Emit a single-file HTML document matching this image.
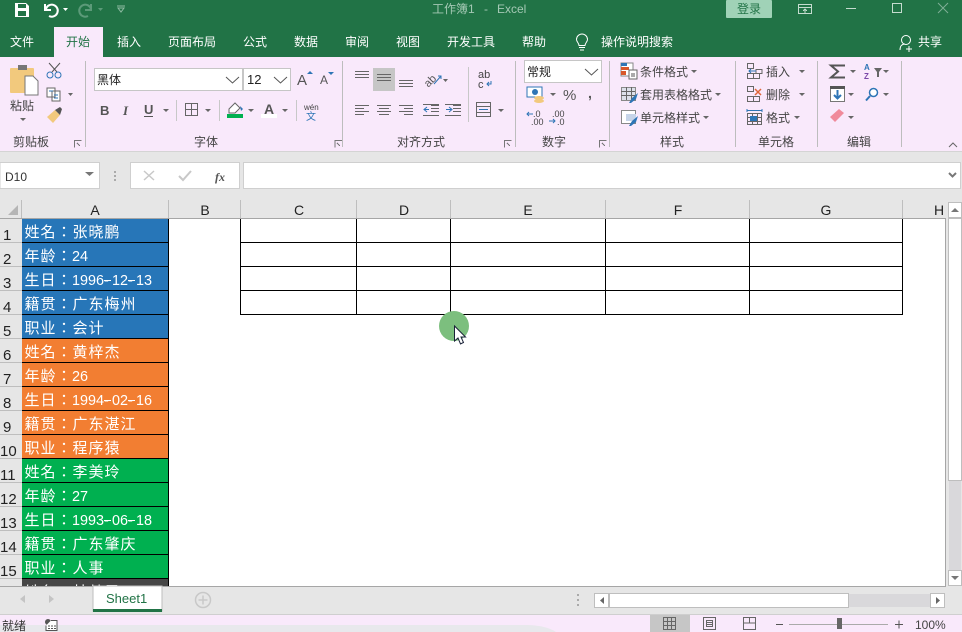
<!DOCTYPE html>
<html><head><meta charset="utf-8"><title>工作簿1 - Excel</title>
<style>
html,body{margin:0;padding:0;background:#E6E6E6;width:962px;height:632px;overflow:hidden}
svg{display:block}
text{font-family:"Liberation Sans","Noto Sans CJK SC",sans-serif;font-size:12px;fill:#444}
.t{fill:#fff}
.c{font-family:"Noto Sans CJK TC",sans-serif;font-size:15px;letter-spacing:1px;fill:#fff}
.n{font-family:"Liberation Sans",sans-serif;font-size:14.4px;fill:#fff}
.h{font-size:14px;fill:#222;text-anchor:middle}
.r{font-size:15px;fill:#222}
.l{fill:none;stroke:#666;stroke-width:1;shape-rendering:crispEdges}
.b{fill:none;stroke:#2E75B6;stroke-width:1.5}
.d{stroke:#fff;shape-rendering:crispEdges}
</style></head><body>
<svg width="962" height="632" viewBox="0 0 962 632" xmlns="http://www.w3.org/2000/svg">
<defs><path id="car" d="M0 0h6l-3 3z" fill="#666"/></defs>
<rect width="962" height="632" fill="#E6E6E6"/>
<!-- title bar -->
<rect width="962" height="57" fill="#217346"/>
<path d="M15 3h11l3 3v11H15z" fill="#fff"/><rect x="18" y="4" width="8" height="4" fill="#217346"/><rect x="18" y="11" width="8" height="5" fill="#217346"/>
<path d="M46 9a6 6 0 1 1 3 7" fill="none" stroke="#fff" stroke-width="2"/><path d="M45 4v6h6" fill="none" stroke="#fff" stroke-width="2"/>
<path d="M63 8h5l-2.500 3z" fill="#fff"/>
<path d="M91 9a6 6 0 1 0-3 7" fill="none" stroke="#5C9A79" stroke-width="2"/><path d="M91 4v6h-6" fill="none" stroke="#5C9A79" stroke-width="2"/>
<path d="M98 8h5l-2.500 3z" fill="#5C9A79"/>
<path d="M117 6h8M118 8h6l-3 4z" fill="none" stroke="#8FBBA3"/>
<text x="432" y="13" style="fill:#A4C8B4;font-size:12px">工作簿1</text><text x="484" y="13" style="fill:#A4C8B4;font-size:12px">-</text><text x="497" y="13" style="fill:#A4C8B4;font-size:12px">Excel</text>
<rect x="726" y="0" width="46" height="18" rx="1" fill="#A0D2B7"/>
<text x="737" y="13" style="fill:#217346">登录</text>
<path d="M798.500 4.500h13v9h-13zM798.500 7.500h13M805 13v-4M803 11l2-2 2 2" fill="none" stroke="#C5DCCF" shape-rendering="crispEdges"/>
<path d="M846 8.500h10" stroke="#C5DCCF" shape-rendering="crispEdges"/>
<rect x="892.500" y="3.500" width="9" height="9" fill="none" stroke="#C5DCCF" shape-rendering="crispEdges"/>
<path d="M938 3l10 10M948 3l-10 10" stroke="#7FAE95"/>
<!-- tabs -->
<rect x="54" y="27" width="49" height="30" fill="#F9E9FB"/>
<text class="t" x="10" y="46">文件</text>
<text x="66" y="46" style="fill:#217346">开始</text>
<text class="t" x="117" y="46">插入</text>
<text class="t" x="168" y="46">页面布局</text>
<text class="t" x="243" y="46">公式</text>
<text class="t" x="294" y="46">数据</text>
<text class="t" x="345" y="46">审阅</text>
<text class="t" x="396" y="46">视图</text>
<text class="t" x="447" y="46">开发工具</text>
<text class="t" x="522" y="46">帮助</text>
<path d="M579 47.500h6M580 50h4M579 45.500c0-2.500-2.500-3.500-2.500-6a5.500 5.500 0 0 1 11 0c0 2.500-2.500 3.500-2.500 6z" fill="none" stroke="#fff"/>
<text class="t" x="601" y="46">操作说明搜索</text>
<circle cx="906" cy="40" r="4.500" fill="none" stroke="#fff"/><path d="M900 50c0-4 2-6 5-6M906 49h6M909 46v6" fill="none" stroke="#fff"/>
<text class="t" x="918" y="46">共享</text>
<!-- ribbon -->
<rect y="57" width="962" height="95" fill="#F9E9FB"/>
<rect y="151" width="962" height="1" fill="#D4D4D4"/>
<g fill="#BDBDBD"><rect x="85" y="61" width="1" height="86"/><rect x="342" y="61" width="1" height="86"/><rect x="515" y="61" width="1" height="86"/><rect x="609" y="61" width="1" height="86"/><rect x="735" y="61" width="1" height="86"/><rect x="817" y="61" width="1" height="86"/><rect x="901" y="61" width="1" height="86"/></g>
<text x="13" y="146">剪贴板</text><text x="194" y="146">字体</text><text x="397" y="146">对齐方式</text><text x="542" y="146">数字</text><text x="660" y="146">样式</text><text x="758" y="146">单元格</text><text x="847" y="146">编辑</text>
<g fill="none" stroke="#777" shape-rendering="crispEdges"><path d="M74.500 147.500v-7h7M335 147.500v-7h7M504.500 147.500v-7h7M599.500 147.500v-7h7M77 143l3 3M337 143l3 3M507 143l3 3M602 143l3 3"/></g>
<path d="M949 147l4-4 4 4" fill="none" stroke="#666"/>
<!-- clipboard -->
<rect x="10" y="68" width="24" height="25" rx="1" fill="#F2C97D"/><rect x="18" y="65" width="9" height="5" fill="#777"/>
<path d="M25 76h8l5 5v14H25z" fill="#fff" stroke="#777"/>
<text x="10" y="110" style="font-size:12px">粘贴</text>
<path d="M20 118h6l-3 3z" fill="#666"/>
<path d="M49 63l8 9M60 63l-8 9" stroke="#555" fill="none"/><circle cx="50" cy="75" r="3" fill="none" stroke="#2E75B6"/><circle cx="58" cy="75" r="3" fill="none" stroke="#2E75B6"/>
<path d="M47 88h8l0 9h-8zM52 91h8v10h-8z" fill="#fff" stroke="#666"/><path d="M49 91h4M54 95h4M54 98h4" stroke="#2E75B6"/>
<path d="M68 93h5l-2.500 3z" fill="#666"/>
<path d="M47 117l8-7 5 5-7 8z" fill="#F2C97D"/><path d="M55 110l5-3 2 2-2 6z" fill="#555"/>
<!-- font -->
<rect x="94.500" y="68.500" width="148" height="22" fill="#fff" stroke="#C6C6C6"/>
<rect x="243.500" y="68.500" width="47" height="22" fill="#fff" stroke="#C6C6C6"/>
<text x="97" y="84" style="fill:#222">黑体</text><text x="247" y="84" style="fill:#222;font-size:13px">12</text>
<path d="M226 77l6.500 6 6.500-6M274 77l6.500 6 6.500-6" fill="none" stroke="#555"/>
<text x="297" y="85" style="font-size:15px;fill:#555">A</text><path d="M307 74h6l-3-3z" fill="#2E75B6"/>
<text x="320" y="84" style="font-size:12px;fill:#555">A</text><path d="M328 72h6l-3 3z" fill="#2E75B6"/>
<text x="100" y="115" style="font-weight:bold;font-size:13px;fill:#555">B</text>
<text x="123" y="115" style="font-style:italic;font-weight:bold;font-family:'Liberation Serif';font-size:13px;fill:#555">I</text>
<text x="144" y="114" style="font-weight:bold;font-size:13px;fill:#555">U</text><rect x="144" y="116" width="9" height="1" fill="#555"/>
<use href="#car" x="163" y="109"/>
<path d="M185.500 103.500h12v12h-12zM191.500 103.500v12M185.500 109.500h12" class="l"/><use href="#car" x="205" y="109"/>
<rect x="176" y="100" width="1" height="21" fill="#C8C8C8"/><rect x="219" y="100" width="1" height="21" fill="#C8C8C8"/><rect x="296" y="100" width="1" height="21" fill="#C8C8C8"/>
<path d="M229 109l6-6 5 5-5 5h-6z" fill="#fff" stroke="#666"/><path d="M240 106l3 3-2 2z" fill="#2E75B6"/><rect x="227" y="114" width="16" height="4" fill="#00B050"/>
<use href="#car" x="248" y="109"/>
<text x="264" y="114" style="font-weight:bold;font-size:14px;fill:#555">A</text><rect x="261" y="114" width="16" height="4" fill="#fff"/>
<use href="#car" x="282" y="109"/>
<text x="304" y="110" style="font-size:8px;fill:#444">wén</text><text x="306" y="120" style="font-size:10px;fill:#2E75B6">文</text>
<!-- alignment -->
<rect x="373" y="68" width="22" height="23" fill="#C6C6C6"/>
<path class="l" d="M355 71.500h14M355 74.500h14M355 77.500h14M377 74.500h14M377 77.500h14M377 80.500h14M399 80.500h14M399 83.500h14M399 86.500h14M355 105.500h14M355 108.500h9M355 111.500h14M355 114.500h9M377 105.500h14M379 108.500h10M377 111.500h14M379 114.500h10M399 105.500h14M404 108.500h9M399 111.500h14M404 114.500h9"/>
<text x="423" y="85" transform="rotate(-45 429 80)" style="font-size:11px;fill:#555">ab</text><path d="M434 84l7-8M438 76h3v3" stroke="#2E75B6" fill="none"/><path d="M443 79h5l-2.500 3z" fill="#666"/>
<path class="l" d="M431 105.500h8M431 108.500h8M431 111.500h8M423 115.500h16M423 104.500h16M453 105.500h8M453 108.500h8M453 111.500h8M445 115.500h16M445 104.500h16"/>
<path d="M429 109.500h-5M427 107l-3 2.500 3 2.500M446 109.500h5M449 107l3 2.500-3 2.500" stroke="#2E75B6" fill="none"/>
<rect x="468" y="67" width="1" height="55" fill="#C8C8C8"/>
<text x="478" y="78" style="font-size:11px;fill:#444">ab</text><text x="478" y="88" style="font-size:11px;fill:#444">c</text><path d="M491 81v3h-4M489 82l-2 2 2 2" fill="none" stroke="#2E75B6"/>
<path class="l" d="M476.500 102.500h14v14h-14zM476.500 106.500h14M476.500 112.500h14"/><path d="M479 109.500h9" stroke="#2E75B6"/>
<use href="#car" x="498" y="109"/>
<!-- number -->
<rect x="524.500" y="60.500" width="77" height="22" fill="#fff" stroke="#C6C6C6"/><text x="527" y="76" style="fill:#222">常规</text>
<path d="M585 69l6.500 6 6.500-6" fill="none" stroke="#555"/>
<rect x="527" y="87" width="15" height="10" fill="#fff" stroke="#2E75B6"/><circle cx="535" cy="92" r="3" fill="#2E75B6"/><ellipse cx="539" cy="98" rx="5" ry="2" fill="#F2C97D"/><ellipse cx="539" cy="101" rx="5" ry="2" fill="#F2C97D"/>
<use href="#car" x="550" y="93"/>
<text x="563" y="100" style="font-size:15px;fill:#555">%</text>
<text x="588" y="98" style="font-size:14px;font-weight:bold;fill:#555">,</text>
<text x="533" y="117" style="font-size:9px">.0</text><text x="531" y="125" style="font-size:9px">.00</text><path d="M533 114h-6M529 112l-2 2 2 2" stroke="#2E75B6" fill="none"/>
<text x="552" y="117" style="font-size:9px">.00</text><text x="557" y="125" style="font-size:9px">.0</text><path d="M549 121h6M553 119l2 2-2 2" stroke="#2E75B6" fill="none"/>
<!-- styles -->
<rect x="621" y="63" width="12" height="13" fill="#fff" stroke="#888"/><rect x="621" y="63" width="6" height="3" fill="#2E75B6"/><rect x="621" y="67" width="8" height="3" fill="#D9572B"/><rect x="621" y="71" width="5" height="4" fill="#D9572B"/><rect x="629" y="70" width="8" height="9" fill="#fff" stroke="#666"/><path d="M631 74h4M631 76h4" stroke="#555"/>
<rect x="621.500" y="87.500" width="14" height="13" fill="#DDE0EA" stroke="#888"/><path class="l" d="M621 91.500h14M621 95.500h14M626.500 87v13M631.500 87v13"/><path d="M629 103l3-5 6-5-2 6-5 4z" fill="#2E75B6"/>
<rect x="621.500" y="110.500" width="14" height="13" fill="#fff" stroke="#888"/><rect x="626" y="114" width="10" height="7" fill="#C6D4E8"/><path d="M629 126l3-5 6-5-2 6-5 4z" fill="#2E75B6"/>
<text x="640" y="76">条件格式</text><use href="#car" x="691" y="70"/>
<text x="640" y="99">套用表格格式</text><use href="#car" x="715" y="93"/>
<text x="640" y="122">单元格样式</text><use href="#car" x="703" y="116"/>
<!-- cells -->
<path class="l" d="M747.500 63.500h6v5h-6zM747.500 73.500h6v5h-6zM753.500 73.500h6v5h-6zM756 69.500h6v4h-6z"/><path d="M756 71h-7M751 69l-2 2 2 2" stroke="#2E75B6" fill="none"/>
<path class="l" d="M747.500 86.500h6v5h-6zM747.500 96.500h6v5h-6zM753.500 96.500h6v5h-6z"/><path d="M755 89l6 6M761 89l-6 6" stroke="#E0673A" stroke-width="1.500"/>
<path class="l" d="M747.500 113.500h14v11h-14zM747.500 117.500h14M747.500 121.500h14M752.500 113v11M757.500 113v11"/><rect x="750" y="116" width="7" height="5" fill="#2E75B6"/><path d="M747 110.500h15M747 109v3M762 109v3" stroke="#2E75B6"/>
<text x="766" y="76">插入</text><use href="#car" x="799" y="70"/>
<text x="766" y="99">删除</text><use href="#car" x="799" y="93"/>
<text x="766" y="122">格式</text><use href="#car" x="794" y="116"/>
<!-- edit -->
<path d="M845 65.500h-14l7 6-7 6h14" fill="none" stroke="#555" stroke-width="2"/><use href="#car" x="850" y="70"/>
<text x="864" y="70" style="font-size:8px;fill:#2E75B6;font-weight:bold">A</text><text x="864" y="79" style="font-size:8px;fill:#7B47A8;font-weight:bold">Z</text><path d="M874 68h8l-3 4v5h-2v-5z" fill="#666"/><use href="#car" x="883" y="70"/>
<rect x="830.500" y="86.500" width="14" height="15" fill="#fff" stroke="#777"/><rect x="830" y="86" width="15" height="3" fill="#555"/><path d="M837.500 90v8M834 95l3.500 3.500L841 95" fill="none" stroke="#2E75B6" stroke-width="2"/><use href="#car" x="848" y="93"/>
<circle cx="873.500" cy="92.500" r="4" fill="#fff" stroke="#2E75B6" stroke-width="1.500"/><path d="M870 96l-4 4.500" stroke="#2E75B6" stroke-width="2"/><use href="#car" x="883" y="93"/>
<path d="M830 117l9-8 5 4-9 9z" fill="#F08A9B"/><use href="#car" x="848" y="116"/>
<!-- formula bar -->
<rect x="0" y="162.500" width="99.500" height="26" fill="#fff" stroke="#CFCFCF"/>
<text x="5" y="181" style="font-size:12px;fill:#333">D10</text><path d="M85 172h9l-4.500 4z" fill="#777"/>
<g fill="#AAA"><rect x="114" y="171" width="2" height="2"/><rect x="114" y="175" width="2" height="2"/><rect x="114" y="179" width="2" height="2"/></g>
<rect x="130.500" y="162.500" width="109" height="26" fill="#fff" stroke="#CFCFCF"/>
<path d="M144 171l10 9M154 171l-10 9" stroke="#C8C8C8" stroke-width="1.500"/>
<path d="M179 176l4 4 8-9" fill="none" stroke="#C8C8C8" stroke-width="2"/>
<text x="215" y="181" style="font-family:'Liberation Serif';font-style:italic;font-weight:bold;font-size:12px;fill:#555">fx</text>
<rect x="243.500" y="162.500" width="717" height="26" fill="#fff" stroke="#CFCFCF"/>
<path d="M949 173l3.500 3.500 3.500-3.500" fill="none" stroke="#777" stroke-width="2"/>
<!-- headers -->
<rect x="0" y="200" width="946" height="18" fill="#E6E6E6"/>
<path d="M18 205v10H8z" fill="#B5B5B5"/>
<rect x="0" y="218" width="946" height="1" fill="#A6A6A6"/>
<g fill="#BEBEBE"><rect x="21" y="200" width="1" height="18"/><rect x="168" y="200" width="1" height="18"/><rect x="240" y="200" width="1" height="18"/><rect x="356" y="200" width="1" height="18"/><rect x="450" y="200" width="1" height="18"/><rect x="605" y="200" width="1" height="18"/><rect x="749" y="200" width="1" height="18"/><rect x="902" y="200" width="1" height="18"/></g>
<text class="h" x="95" y="215">A</text><text class="h" x="205" y="215">B</text><text class="h" x="299" y="215">C</text><text class="h" x="404" y="215">D</text><text class="h" x="528" y="215">E</text><text class="h" x="678" y="215">F</text><text class="h" x="826" y="215">G</text><text class="h" x="939" y="215">H</text>
<!-- sheet -->
<rect x="22" y="219" width="924" height="367" fill="#fff"/>
<rect x="945" y="218" width="1" height="368" fill="#A6A6A6"/>
<!-- col A -->
<rect x="22" y="219" width="146" height="119" fill="#2776B8"/>
<rect x="22" y="339" width="146" height="119" fill="#F27E32"/>
<rect x="22" y="459" width="146" height="119" fill="#00B050"/>
<rect x="22" y="579" width="146" height="7" fill="#464646"/>
<text class="c" x="24.500" y="237">姓名：张晓鹏</text>
<text class="c" x="24.500" y="261">年龄：</text><text class="n" x="72 80" y="261">24</text>
<text class="c" x="24.500" y="285">生日：</text><text class="n" x="72 80 88 96 104 112 120 128 136 144" y="285">1996-12-13</text><path class="d" d="M104 280.500h7M128 280.500h7"/>
<text class="c" x="24.500" y="309">籍贯：广东梅州</text>
<text class="c" x="24.500" y="333">职业：会计</text>
<text class="c" x="24.500" y="357">姓名：黄梓杰</text>
<text class="c" x="24.500" y="381">年龄：</text><text class="n" x="72 80" y="381">26</text>
<text class="c" x="24.500" y="405">生日：</text><text class="n" x="72 80 88 96 104 112 120 128 136 144" y="405">1994-02-16</text><path class="d" d="M104 400.500h7M128 400.500h7"/>
<text class="c" x="24.500" y="429">籍贯：广东湛江</text>
<text class="c" x="24.500" y="453">职业：程序猿</text>
<text class="c" x="24.500" y="477">姓名：李美玲</text>
<text class="c" x="24.500" y="501">年龄：</text><text class="n" x="72 80" y="501">27</text>
<text class="c" x="24.500" y="525">生日：</text><text class="n" x="72 80 88 96 104 112 120 128 136 144" y="525">1993-06-18</text><path class="d" d="M104 520.500h7M128 520.500h7"/>
<text class="c" x="24.500" y="549">籍贯：广东肇庆</text>
<text class="c" x="24.500" y="573">职业：人事</text>
<svg x="0" y="579" width="168" height="7" viewBox="0 579 168 7"><text class="c" x="24.500" y="597">姓名：林楚思</text></svg>
<g shape-rendering="crispEdges">
<path stroke="#000" d="M22 242.500h146M22 266.500h146M22 290.500h146M22 314.500h146M22 338.500h146M22 362.500h146M22 386.500h146M22 410.500h146M22 434.500h146M22 458.500h146M22 482.500h146M22 506.500h146M22 530.500h146M22 554.500h146M22 578.500h146M168.500 219v367"/>
<path stroke="#000" d="M240.500 219v96M356.500 219v96M450.500 219v96M605.500 219v96M749.500 219v96M902.500 219v96M240 242.500h663M240 266.500h663M240 290.500h663M240 314.500h663"/>
</g>
<!-- row headers -->
<rect x="0" y="219" width="22" height="367" fill="#E6E6E6"/>
<g fill="#BEBEBE"><rect x="0" y="242" width="22" height="1"/><rect x="0" y="266" width="22" height="1"/><rect x="0" y="290" width="22" height="1"/><rect x="0" y="314" width="22" height="1"/><rect x="0" y="338" width="22" height="1"/><rect x="0" y="362" width="22" height="1"/><rect x="0" y="386" width="22" height="1"/><rect x="0" y="410" width="22" height="1"/><rect x="0" y="434" width="22" height="1"/><rect x="0" y="458" width="22" height="1"/><rect x="0" y="482" width="22" height="1"/><rect x="0" y="506" width="22" height="1"/><rect x="0" y="530" width="22" height="1"/><rect x="0" y="554" width="22" height="1"/><rect x="0" y="578" width="22" height="1"/></g>
<text class="r" x="3" y="240">1</text><text class="r" x="3" y="264">2</text><text class="r" x="3" y="288">3</text><text class="r" x="3" y="312">4</text><text class="r" x="3" y="336">5</text><text class="r" x="3" y="360">6</text><text class="r" x="3" y="384">7</text><text class="r" x="3" y="408">8</text><text class="r" x="3" y="432">9</text><text class="r" x="0" y="456">10</text><text class="r" x="0" y="480">11</text><text class="r" x="0" y="504">12</text><text class="r" x="0" y="528">13</text><text class="r" x="0" y="552">14</text><text class="r" x="0" y="576">15</text>
<!-- highlight + cursor -->
<circle cx="454" cy="326" r="15" fill="#7CBF7E"/>
<path d="M454.500 326v15l3.500-3 2.500 6 3-1.500-2.500-5.500h4.500z" fill="#fff" stroke="#1A2238"/>
<!-- v scroll -->
<rect x="946" y="200" width="16" height="386" fill="#E6E6E6"/>
<rect x="948.500" y="202.500" width="13" height="15" fill="#fff" stroke="#BEBEBE"/><path d="M951 212l4-4 4 4z" fill="#777"/>
<rect x="948.500" y="218.500" width="13" height="262" fill="#fff" stroke="#BEBEBE"/>
<rect x="949" y="481" width="12" height="89" fill="#D9D8DB"/>
<rect x="948.500" y="570.500" width="13" height="15" fill="#fff" stroke="#BEBEBE"/><path d="M951 576l4 4 4-4z" fill="#777"/>
<!-- sheet tabs -->
<rect x="0" y="586" width="946" height="1" fill="#A6A6A6"/>
<rect x="93" y="586" width="69" height="25" fill="#fff" stroke="#BEBEBE"/><rect x="93" y="609" width="69" height="3" fill="#217346"/>
<text x="106" y="603" style="fill:#217346;font-size:13px">Sheet1</text>
<path d="M25 595v8l-5-4zM49 595v8l5-4z" fill="#C4C4C4"/>
<circle cx="203" cy="600" r="7.500" fill="none" stroke="#C8C8C8" stroke-width="1.500"/><path d="M198.500 600h9M203 595.500v9" stroke="#C8C8C8" stroke-width="1.500"/>
<g fill="#AAA"><rect x="577" y="594" width="2" height="2"/><rect x="577" y="599" width="2" height="2"/><rect x="577" y="604" width="2" height="2"/></g>
<rect x="594.500" y="593.500" width="14" height="14" fill="#fff" stroke="#BEBEBE"/><path d="M604 597v7l-4-3.500z" fill="#666"/>
<rect x="609.500" y="593.500" width="239" height="14" fill="#fff" stroke="#BEBEBE"/>
<rect x="849" y="594" width="81" height="13" fill="#D9D8DB"/>
<rect x="930.500" y="593.500" width="14" height="14" fill="#fff" stroke="#BEBEBE"/><path d="M936 597v7l4-3.500z" fill="#666"/>
<!-- status -->
<rect y="614" width="962" height="1" fill="#CFCFCF"/>
<rect y="615" width="962" height="17" fill="#F9E9FB"/>
<path d="M0 625H525C540 625 550 628 556 632H0z" fill="#E8E8EC"/>
<text x="2" y="630" style="fill:#333">就绪</text>
<circle cx="48" cy="622" r="3" fill="#555"/><path d="M51 620.500h6v10h-11v-5" fill="#fff" stroke="#555"/><path d="M48 626h8M48 628.500h8" stroke="#555" stroke-dasharray="2 1"/>
<rect x="650" y="615" width="40" height="17" fill="#C6C6C6"/>
<path class="l" d="M663.500 617.500h12v12h-12zM663.500 621.500h12M663.500 625.500h12M667.500 617v12M671.500 617v12"/>
<path class="l" d="M703.500 617.500h12v12h-12zM706.500 620.500h6v6h-6zM707 622.500h5M707 624.500h5"/>
<path class="l" d="M743.500 617.500h12v12h-12zM749.500 617v6h6M749.500 623h-6"/>
<path d="M776 624.500h7M895 624.500h8M899 620.500v8" stroke="#555" shape-rendering="crispEdges"/>
<rect x="789" y="624" width="99" height="1" fill="#AAA"/><rect x="837" y="618" width="5" height="11" fill="#666"/>
<text x="915" y="629" style="fill:#444">100%</text>
</svg>
</body></html>
